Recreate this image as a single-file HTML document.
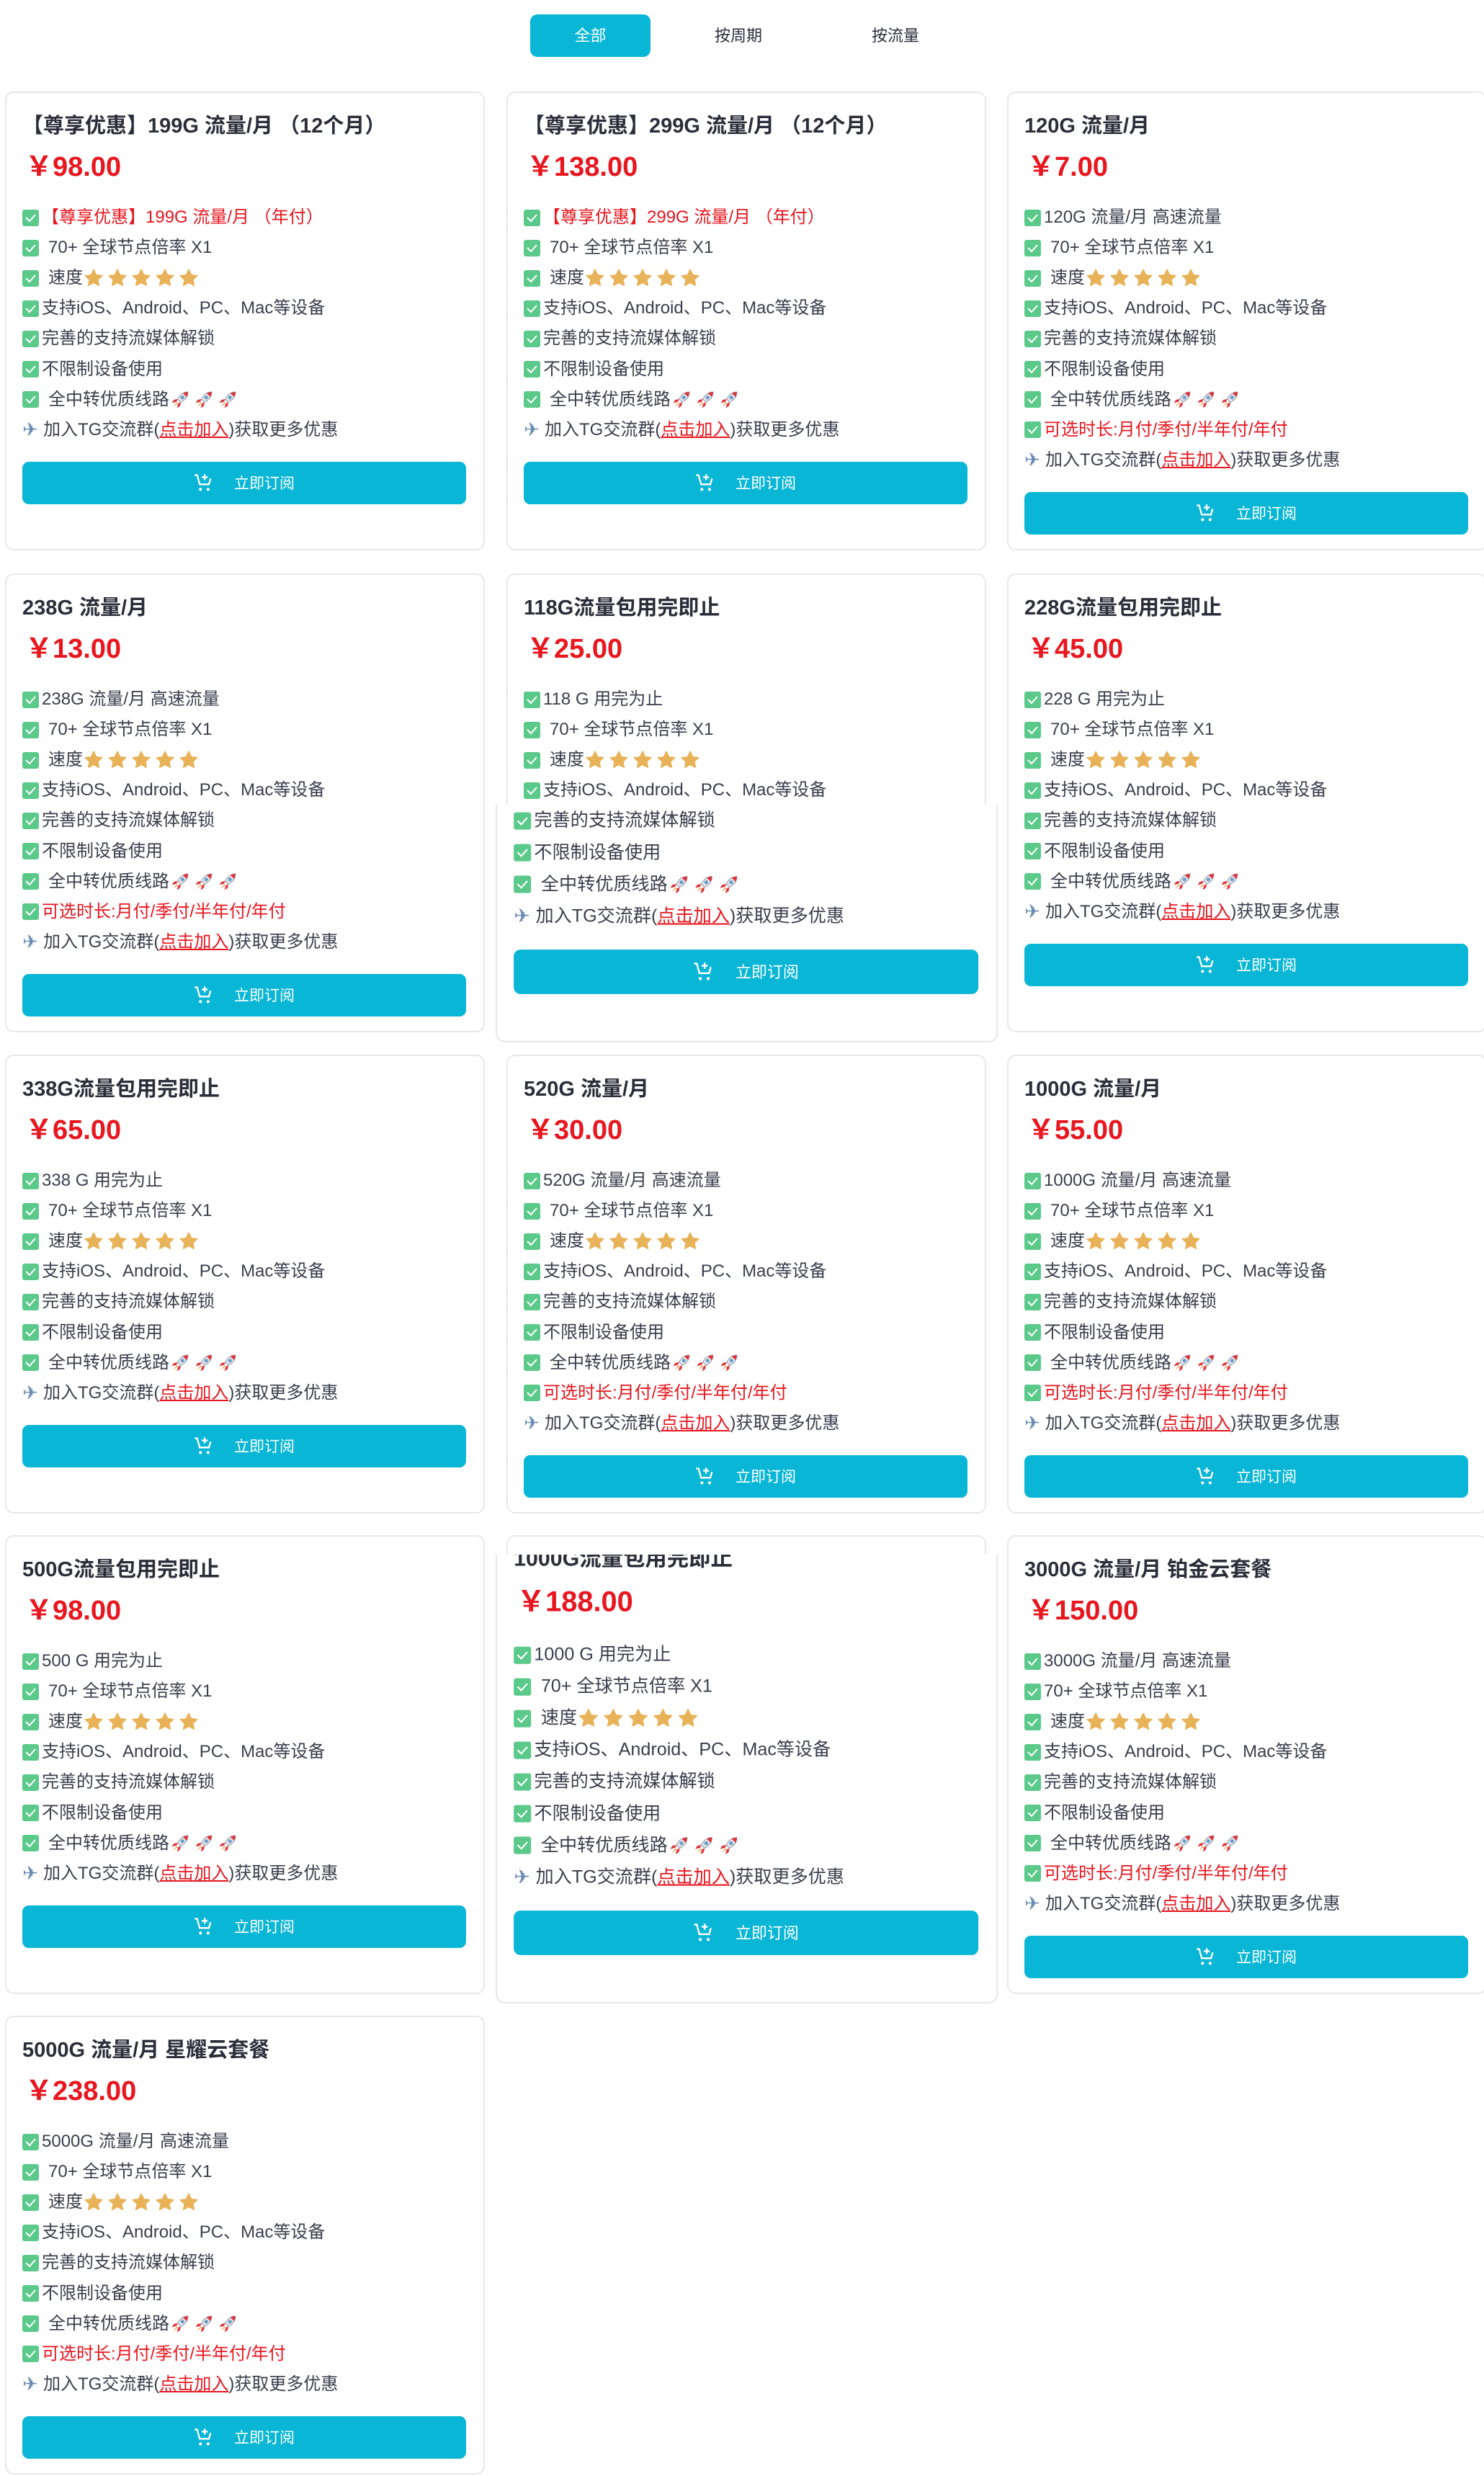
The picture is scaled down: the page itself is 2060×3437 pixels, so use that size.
<!DOCTYPE html>
<html><head><meta charset="utf-8">
<style>
*{margin:0;padding:0;box-sizing:border-box}
body{width:2060px;height:3437px;background:#fff;position:relative;overflow:hidden;font-family:"Liberation Sans","Noto Sans CJK SC",sans-serif;color:#3a3e4c}
.tab{position:absolute;top:20px;height:59px;line-height:59px;font-size:22px;text-align:center}
.tab.on{left:736px;width:167px;background:#0ab6d6;color:#fff;border-radius:10px}
.card{position:absolute;width:666px;height:637px;border:2px solid #e8e8e8;border-radius:12px;background:#fff;padding:28px 22px 0 22px}
.t{font-size:29px;font-weight:bold;line-height:36px;color:#2b2e3a;white-space:nowrap;padding-left:0}
.p{font-size:38px;font-weight:bold;color:#e8161f;line-height:44px;margin-top:17px;padding-left:4px}
.ls{margin-top:27px}
.l{height:42.1px;line-height:42px;font-size:24px;white-space:nowrap;display:flex;align-items:center}
.ck{width:23px;height:23px;background:#5bc98a;border-radius:3px;display:inline-block;flex:none;margin-right:4px;position:relative}
.ck svg{position:absolute;left:3px;top:4px}
.sp{display:inline-block;width:9px}
.r{color:#e8161f}
.a{color:#e8161f;text-decoration:underline}
.pl{color:#6a8bb2;font-size:26px;width:29px;display:inline-block;font-family:"DejaVu Sans",sans-serif}
.btn{margin-top:23px;height:59px;background:#0ab6d6;border-radius:9px;color:#fff;font-size:21px;display:flex;align-items:center;justify-content:center;width:616px}
.btn svg{margin-right:28px}
.st{display:inline-flex;gap:7px;margin-left:2px}
.ro{display:inline-flex;gap:7px;margin-left:2px}
.clip{position:absolute;overflow:hidden;left:0;width:2060px}
.sc{transform:scale(1.047);transform-origin:0 0}
</style></head><body>
<svg width="0" height="0" style="position:absolute">
<defs>
<symbol id="star" viewBox="0 0 24 24"><path d="M12 1l3.4 6.9 7.6 1-5.5 5.2 1.4 7.5L12 18l-6.9 3.6 1.4-7.5L1 9l7.6-1z" fill="#e8b258" stroke="#e8b258" stroke-width="1.2" stroke-linejoin="round"/></symbol>
<symbol id="rk" viewBox="0 0 24 24"><path d="M22 2c-6 0-10 3-13 9l4 4c6-3 9-7 9-13z" fill="#e4e8ee" stroke="#8d97a6" stroke-width=".9"/><path d="M22 2c-2.5 0-4.5.6-6.3 1.7l4.6 4.6C21.4 6.5 22 4.5 22 2z" fill="#e0353d"/><circle cx="15" cy="9" r="2.1" fill="#5aa0d8" stroke="#8d97a6" stroke-width=".6"/><path d="M9 11l-5 1-2.5 4 6-1.5zM13 15l-1 5-4 2.5 1.5-6z" fill="#e0353d"/><path d="M8 15l-5 6 6-4.5z" fill="#f29a3a"/></symbol>
<symbol id="cart" viewBox="0 0 24 24"><path d="M1 3h3l3 11h11l2-7" fill="none" stroke="#fff" stroke-width="2"/><path d="M13 2v7M9.5 5.5h7" stroke="#fff" stroke-width="2"/><circle cx="8" cy="20" r="1.8" fill="#fff"/><circle cx="17" cy="20" r="1.8" fill="#fff"/></symbol>
</defs></svg>

<div class="tab on">全部</div>
<div class="tab" style="left:985px;width:80px;color:#2b2e3a">按周期</div>
<div class="tab" style="left:1203px;width:80px;color:#2b2e3a">按流量</div>

<!-- Row 1 -->
<div class="card" style="left:7px;top:127px">
<div class="t">【尊享优惠】199G 流量/月 （12个月）</div><div class="p">￥98.00</div>
<div class="ls">
<div class="l"><span class="ck"><svg width="17" height="15"><path d="M2 7l5 5 8-9" fill="none" stroke="#fff" stroke-width="2"/></svg></span><span class="r">【尊享优惠】199G 流量/月 （年付）</span></div>
<div class="l"><span class="ck"><svg width="17" height="15"><path d="M2 7l5 5 8-9" fill="none" stroke="#fff" stroke-width="2"/></svg></span><span class="sp"></span>70+ 全球节点倍率 X1</div>
<div class="l"><span class="ck"><svg width="17" height="15"><path d="M2 7l5 5 8-9" fill="none" stroke="#fff" stroke-width="2"/></svg></span><span class="sp"></span>速度<span class="st"><svg width="26" height="26"><use href="#star"/></svg><svg width="26" height="26"><use href="#star"/></svg><svg width="26" height="26"><use href="#star"/></svg><svg width="26" height="26"><use href="#star"/></svg><svg width="26" height="26"><use href="#star"/></svg></span></div>
<div class="l"><span class="ck"><svg width="17" height="15"><path d="M2 7l5 5 8-9" fill="none" stroke="#fff" stroke-width="2"/></svg></span>支持iOS、Android、PC、Mac等设备</div>
<div class="l"><span class="ck"><svg width="17" height="15"><path d="M2 7l5 5 8-9" fill="none" stroke="#fff" stroke-width="2"/></svg></span>完善的支持流媒体解锁</div>
<div class="l"><span class="ck"><svg width="17" height="15"><path d="M2 7l5 5 8-9" fill="none" stroke="#fff" stroke-width="2"/></svg></span>不限制设备使用</div>
<div class="l"><span class="ck"><svg width="17" height="15"><path d="M2 7l5 5 8-9" fill="none" stroke="#fff" stroke-width="2"/></svg></span><span class="sp"></span>全中转优质线路<span class="ro"><svg width="26" height="26"><use href="#rk"/></svg><svg width="26" height="26"><use href="#rk"/></svg><svg width="26" height="26"><use href="#rk"/></svg></span></div>
<div class="l"><span class="pl">✈</span>加入TG交流群(<span class="a">点击加入</span>)获取更多优惠</div>
</div>
<div class="btn"><svg width="28" height="28"><use href="#cart"/></svg>立即订阅</div>
</div>

<div class="card" style="left:703px;top:127px">
<div class="t">【尊享优惠】299G 流量/月 （12个月）</div><div class="p">￥138.00</div>
<div class="ls">
<div class="l"><span class="ck"><svg width="17" height="15"><path d="M2 7l5 5 8-9" fill="none" stroke="#fff" stroke-width="2"/></svg></span><span class="r">【尊享优惠】299G 流量/月 （年付）</span></div>
<div class="l"><span class="ck"><svg width="17" height="15"><path d="M2 7l5 5 8-9" fill="none" stroke="#fff" stroke-width="2"/></svg></span><span class="sp"></span>70+ 全球节点倍率 X1</div>
<div class="l"><span class="ck"><svg width="17" height="15"><path d="M2 7l5 5 8-9" fill="none" stroke="#fff" stroke-width="2"/></svg></span><span class="sp"></span>速度<span class="st"><svg width="26" height="26"><use href="#star"/></svg><svg width="26" height="26"><use href="#star"/></svg><svg width="26" height="26"><use href="#star"/></svg><svg width="26" height="26"><use href="#star"/></svg><svg width="26" height="26"><use href="#star"/></svg></span></div>
<div class="l"><span class="ck"><svg width="17" height="15"><path d="M2 7l5 5 8-9" fill="none" stroke="#fff" stroke-width="2"/></svg></span>支持iOS、Android、PC、Mac等设备</div>
<div class="l"><span class="ck"><svg width="17" height="15"><path d="M2 7l5 5 8-9" fill="none" stroke="#fff" stroke-width="2"/></svg></span>完善的支持流媒体解锁</div>
<div class="l"><span class="ck"><svg width="17" height="15"><path d="M2 7l5 5 8-9" fill="none" stroke="#fff" stroke-width="2"/></svg></span>不限制设备使用</div>
<div class="l"><span class="ck"><svg width="17" height="15"><path d="M2 7l5 5 8-9" fill="none" stroke="#fff" stroke-width="2"/></svg></span><span class="sp"></span>全中转优质线路<span class="ro"><svg width="26" height="26"><use href="#rk"/></svg><svg width="26" height="26"><use href="#rk"/></svg><svg width="26" height="26"><use href="#rk"/></svg></span></div>
<div class="l"><span class="pl">✈</span>加入TG交流群(<span class="a">点击加入</span>)获取更多优惠</div>
</div>
<div class="btn"><svg width="28" height="28"><use href="#cart"/></svg>立即订阅</div>
</div>

<div class="card" style="left:1398px;top:127px">
<div class="t">120G 流量/月</div><div class="p">￥7.00</div>
<div class="ls">
<div class="l"><span class="ck"><svg width="17" height="15"><path d="M2 7l5 5 8-9" fill="none" stroke="#fff" stroke-width="2"/></svg></span>120G 流量/月 高速流量</div>
<div class="l"><span class="ck"><svg width="17" height="15"><path d="M2 7l5 5 8-9" fill="none" stroke="#fff" stroke-width="2"/></svg></span><span class="sp"></span>70+ 全球节点倍率 X1</div>
<div class="l"><span class="ck"><svg width="17" height="15"><path d="M2 7l5 5 8-9" fill="none" stroke="#fff" stroke-width="2"/></svg></span><span class="sp"></span>速度<span class="st"><svg width="26" height="26"><use href="#star"/></svg><svg width="26" height="26"><use href="#star"/></svg><svg width="26" height="26"><use href="#star"/></svg><svg width="26" height="26"><use href="#star"/></svg><svg width="26" height="26"><use href="#star"/></svg></span></div>
<div class="l"><span class="ck"><svg width="17" height="15"><path d="M2 7l5 5 8-9" fill="none" stroke="#fff" stroke-width="2"/></svg></span>支持iOS、Android、PC、Mac等设备</div>
<div class="l"><span class="ck"><svg width="17" height="15"><path d="M2 7l5 5 8-9" fill="none" stroke="#fff" stroke-width="2"/></svg></span>完善的支持流媒体解锁</div>
<div class="l"><span class="ck"><svg width="17" height="15"><path d="M2 7l5 5 8-9" fill="none" stroke="#fff" stroke-width="2"/></svg></span>不限制设备使用</div>
<div class="l"><span class="ck"><svg width="17" height="15"><path d="M2 7l5 5 8-9" fill="none" stroke="#fff" stroke-width="2"/></svg></span><span class="sp"></span>全中转优质线路<span class="ro"><svg width="26" height="26"><use href="#rk"/></svg><svg width="26" height="26"><use href="#rk"/></svg><svg width="26" height="26"><use href="#rk"/></svg></span></div>
<div class="l"><span class="ck"><svg width="17" height="15"><path d="M2 7l5 5 8-9" fill="none" stroke="#fff" stroke-width="2"/></svg></span><span class="r">可选时长:月付/季付/半年付/年付</span></div>
<div class="l"><span class="pl">✈</span>加入TG交流群(<span class="a">点击加入</span>)获取更多优惠</div>
</div>
<div class="btn"><svg width="28" height="28"><use href="#cart"/></svg>立即订阅</div>
</div>

<!-- Row 2 -->
<div class="card" style="left:7px;top:796px">
<div class="t">238G 流量/月</div><div class="p">￥13.00</div>
<div class="ls">
<div class="l"><span class="ck"><svg width="17" height="15"><path d="M2 7l5 5 8-9" fill="none" stroke="#fff" stroke-width="2"/></svg></span>238G 流量/月 高速流量</div>
<div class="l"><span class="ck"><svg width="17" height="15"><path d="M2 7l5 5 8-9" fill="none" stroke="#fff" stroke-width="2"/></svg></span><span class="sp"></span>70+ 全球节点倍率 X1</div>
<div class="l"><span class="ck"><svg width="17" height="15"><path d="M2 7l5 5 8-9" fill="none" stroke="#fff" stroke-width="2"/></svg></span><span class="sp"></span>速度<span class="st"><svg width="26" height="26"><use href="#star"/></svg><svg width="26" height="26"><use href="#star"/></svg><svg width="26" height="26"><use href="#star"/></svg><svg width="26" height="26"><use href="#star"/></svg><svg width="26" height="26"><use href="#star"/></svg></span></div>
<div class="l"><span class="ck"><svg width="17" height="15"><path d="M2 7l5 5 8-9" fill="none" stroke="#fff" stroke-width="2"/></svg></span>支持iOS、Android、PC、Mac等设备</div>
<div class="l"><span class="ck"><svg width="17" height="15"><path d="M2 7l5 5 8-9" fill="none" stroke="#fff" stroke-width="2"/></svg></span>完善的支持流媒体解锁</div>
<div class="l"><span class="ck"><svg width="17" height="15"><path d="M2 7l5 5 8-9" fill="none" stroke="#fff" stroke-width="2"/></svg></span>不限制设备使用</div>
<div class="l"><span class="ck"><svg width="17" height="15"><path d="M2 7l5 5 8-9" fill="none" stroke="#fff" stroke-width="2"/></svg></span><span class="sp"></span>全中转优质线路<span class="ro"><svg width="26" height="26"><use href="#rk"/></svg><svg width="26" height="26"><use href="#rk"/></svg><svg width="26" height="26"><use href="#rk"/></svg></span></div>
<div class="l"><span class="ck"><svg width="17" height="15"><path d="M2 7l5 5 8-9" fill="none" stroke="#fff" stroke-width="2"/></svg></span><span class="r">可选时长:月付/季付/半年付/年付</span></div>
<div class="l"><span class="pl">✈</span>加入TG交流群(<span class="a">点击加入</span>)获取更多优惠</div>
</div>
<div class="btn"><svg width="28" height="28"><use href="#cart"/></svg>立即订阅</div>
</div>

<div class="clip" style="top:796px;height:321px">
<div class="card" style="left:703px;top:0">
<div class="t">118G流量包用完即止</div><div class="p">￥25.00</div>
<div class="ls">
<div class="l"><span class="ck"><svg width="17" height="15"><path d="M2 7l5 5 8-9" fill="none" stroke="#fff" stroke-width="2"/></svg></span>118 G 用完为止</div>
<div class="l"><span class="ck"><svg width="17" height="15"><path d="M2 7l5 5 8-9" fill="none" stroke="#fff" stroke-width="2"/></svg></span><span class="sp"></span>70+ 全球节点倍率 X1</div>
<div class="l"><span class="ck"><svg width="17" height="15"><path d="M2 7l5 5 8-9" fill="none" stroke="#fff" stroke-width="2"/></svg></span><span class="sp"></span>速度<span class="st"><svg width="26" height="26"><use href="#star"/></svg><svg width="26" height="26"><use href="#star"/></svg><svg width="26" height="26"><use href="#star"/></svg><svg width="26" height="26"><use href="#star"/></svg><svg width="26" height="26"><use href="#star"/></svg></span></div>
<div class="l"><span class="ck"><svg width="17" height="15"><path d="M2 7l5 5 8-9" fill="none" stroke="#fff" stroke-width="2"/></svg></span>支持iOS、Android、PC、Mac等设备</div>
</div></div></div>
<div class="clip" style="top:1117px;height:340px">
<div class="card sc" style="left:688px;top:-337px">
<div class="t">118G流量包用完即止</div><div class="p">￥25.00</div>
<div class="ls">
<div class="l"><span class="ck"></span>118 G 用完为止</div>
<div class="l"><span class="ck"></span>70+</div>
<div class="l"><span class="ck"></span>速度</div>
<div class="l"><span class="ck"></span>支持iOS</div>
<div class="l"><span class="ck"><svg width="17" height="15"><path d="M2 7l5 5 8-9" fill="none" stroke="#fff" stroke-width="2"/></svg></span>完善的支持流媒体解锁</div>
<div class="l"><span class="ck"><svg width="17" height="15"><path d="M2 7l5 5 8-9" fill="none" stroke="#fff" stroke-width="2"/></svg></span>不限制设备使用</div>
<div class="l"><span class="ck"><svg width="17" height="15"><path d="M2 7l5 5 8-9" fill="none" stroke="#fff" stroke-width="2"/></svg></span><span class="sp"></span>全中转优质线路<span class="ro"><svg width="26" height="26"><use href="#rk"/></svg><svg width="26" height="26"><use href="#rk"/></svg><svg width="26" height="26"><use href="#rk"/></svg></span></div>
<div class="l"><span class="pl">✈</span>加入TG交流群(<span class="a">点击加入</span>)获取更多优惠</div>
</div>
<div class="btn"><svg width="28" height="28"><use href="#cart"/></svg>立即订阅</div>
</div></div>

<div class="card" style="left:1398px;top:796px">
<div class="t">228G流量包用完即止</div><div class="p">￥45.00</div>
<div class="ls">
<div class="l"><span class="ck"><svg width="17" height="15"><path d="M2 7l5 5 8-9" fill="none" stroke="#fff" stroke-width="2"/></svg></span>228 G 用完为止</div>
<div class="l"><span class="ck"><svg width="17" height="15"><path d="M2 7l5 5 8-9" fill="none" stroke="#fff" stroke-width="2"/></svg></span><span class="sp"></span>70+ 全球节点倍率 X1</div>
<div class="l"><span class="ck"><svg width="17" height="15"><path d="M2 7l5 5 8-9" fill="none" stroke="#fff" stroke-width="2"/></svg></span><span class="sp"></span>速度<span class="st"><svg width="26" height="26"><use href="#star"/></svg><svg width="26" height="26"><use href="#star"/></svg><svg width="26" height="26"><use href="#star"/></svg><svg width="26" height="26"><use href="#star"/></svg><svg width="26" height="26"><use href="#star"/></svg></span></div>
<div class="l"><span class="ck"><svg width="17" height="15"><path d="M2 7l5 5 8-9" fill="none" stroke="#fff" stroke-width="2"/></svg></span>支持iOS、Android、PC、Mac等设备</div>
<div class="l"><span class="ck"><svg width="17" height="15"><path d="M2 7l5 5 8-9" fill="none" stroke="#fff" stroke-width="2"/></svg></span>完善的支持流媒体解锁</div>
<div class="l"><span class="ck"><svg width="17" height="15"><path d="M2 7l5 5 8-9" fill="none" stroke="#fff" stroke-width="2"/></svg></span>不限制设备使用</div>
<div class="l"><span class="ck"><svg width="17" height="15"><path d="M2 7l5 5 8-9" fill="none" stroke="#fff" stroke-width="2"/></svg></span><span class="sp"></span>全中转优质线路<span class="ro"><svg width="26" height="26"><use href="#rk"/></svg><svg width="26" height="26"><use href="#rk"/></svg><svg width="26" height="26"><use href="#rk"/></svg></span></div>
<div class="l"><span class="pl">✈</span>加入TG交流群(<span class="a">点击加入</span>)获取更多优惠</div>
</div>
<div class="btn"><svg width="28" height="28"><use href="#cart"/></svg>立即订阅</div>
</div>

<!-- Row 3 -->
<div class="card" style="left:7px;top:1464px">
<div class="t">338G流量包用完即止</div><div class="p">￥65.00</div>
<div class="ls">
<div class="l"><span class="ck"><svg width="17" height="15"><path d="M2 7l5 5 8-9" fill="none" stroke="#fff" stroke-width="2"/></svg></span>338 G 用完为止</div>
<div class="l"><span class="ck"><svg width="17" height="15"><path d="M2 7l5 5 8-9" fill="none" stroke="#fff" stroke-width="2"/></svg></span><span class="sp"></span>70+ 全球节点倍率 X1</div>
<div class="l"><span class="ck"><svg width="17" height="15"><path d="M2 7l5 5 8-9" fill="none" stroke="#fff" stroke-width="2"/></svg></span><span class="sp"></span>速度<span class="st"><svg width="26" height="26"><use href="#star"/></svg><svg width="26" height="26"><use href="#star"/></svg><svg width="26" height="26"><use href="#star"/></svg><svg width="26" height="26"><use href="#star"/></svg><svg width="26" height="26"><use href="#star"/></svg></span></div>
<div class="l"><span class="ck"><svg width="17" height="15"><path d="M2 7l5 5 8-9" fill="none" stroke="#fff" stroke-width="2"/></svg></span>支持iOS、Android、PC、Mac等设备</div>
<div class="l"><span class="ck"><svg width="17" height="15"><path d="M2 7l5 5 8-9" fill="none" stroke="#fff" stroke-width="2"/></svg></span>完善的支持流媒体解锁</div>
<div class="l"><span class="ck"><svg width="17" height="15"><path d="M2 7l5 5 8-9" fill="none" stroke="#fff" stroke-width="2"/></svg></span>不限制设备使用</div>
<div class="l"><span class="ck"><svg width="17" height="15"><path d="M2 7l5 5 8-9" fill="none" stroke="#fff" stroke-width="2"/></svg></span><span class="sp"></span>全中转优质线路<span class="ro"><svg width="26" height="26"><use href="#rk"/></svg><svg width="26" height="26"><use href="#rk"/></svg><svg width="26" height="26"><use href="#rk"/></svg></span></div>
<div class="l"><span class="pl">✈</span>加入TG交流群(<span class="a">点击加入</span>)获取更多优惠</div>
</div>
<div class="btn"><svg width="28" height="28"><use href="#cart"/></svg>立即订阅</div>
</div>

<div class="card" style="left:703px;top:1464px">
<div class="t">520G 流量/月</div><div class="p">￥30.00</div>
<div class="ls">
<div class="l"><span class="ck"><svg width="17" height="15"><path d="M2 7l5 5 8-9" fill="none" stroke="#fff" stroke-width="2"/></svg></span>520G 流量/月 高速流量</div>
<div class="l"><span class="ck"><svg width="17" height="15"><path d="M2 7l5 5 8-9" fill="none" stroke="#fff" stroke-width="2"/></svg></span><span class="sp"></span>70+ 全球节点倍率 X1</div>
<div class="l"><span class="ck"><svg width="17" height="15"><path d="M2 7l5 5 8-9" fill="none" stroke="#fff" stroke-width="2"/></svg></span><span class="sp"></span>速度<span class="st"><svg width="26" height="26"><use href="#star"/></svg><svg width="26" height="26"><use href="#star"/></svg><svg width="26" height="26"><use href="#star"/></svg><svg width="26" height="26"><use href="#star"/></svg><svg width="26" height="26"><use href="#star"/></svg></span></div>
<div class="l"><span class="ck"><svg width="17" height="15"><path d="M2 7l5 5 8-9" fill="none" stroke="#fff" stroke-width="2"/></svg></span>支持iOS、Android、PC、Mac等设备</div>
<div class="l"><span class="ck"><svg width="17" height="15"><path d="M2 7l5 5 8-9" fill="none" stroke="#fff" stroke-width="2"/></svg></span>完善的支持流媒体解锁</div>
<div class="l"><span class="ck"><svg width="17" height="15"><path d="M2 7l5 5 8-9" fill="none" stroke="#fff" stroke-width="2"/></svg></span>不限制设备使用</div>
<div class="l"><span class="ck"><svg width="17" height="15"><path d="M2 7l5 5 8-9" fill="none" stroke="#fff" stroke-width="2"/></svg></span><span class="sp"></span>全中转优质线路<span class="ro"><svg width="26" height="26"><use href="#rk"/></svg><svg width="26" height="26"><use href="#rk"/></svg><svg width="26" height="26"><use href="#rk"/></svg></span></div>
<div class="l"><span class="ck"><svg width="17" height="15"><path d="M2 7l5 5 8-9" fill="none" stroke="#fff" stroke-width="2"/></svg></span><span class="r">可选时长:月付/季付/半年付/年付</span></div>
<div class="l"><span class="pl">✈</span>加入TG交流群(<span class="a">点击加入</span>)获取更多优惠</div>
</div>
<div class="btn"><svg width="28" height="28"><use href="#cart"/></svg>立即订阅</div>
</div>

<div class="card" style="left:1398px;top:1464px">
<div class="t">1000G 流量/月</div><div class="p">￥55.00</div>
<div class="ls">
<div class="l"><span class="ck"><svg width="17" height="15"><path d="M2 7l5 5 8-9" fill="none" stroke="#fff" stroke-width="2"/></svg></span>1000G 流量/月 高速流量</div>
<div class="l"><span class="ck"><svg width="17" height="15"><path d="M2 7l5 5 8-9" fill="none" stroke="#fff" stroke-width="2"/></svg></span><span class="sp"></span>70+ 全球节点倍率 X1</div>
<div class="l"><span class="ck"><svg width="17" height="15"><path d="M2 7l5 5 8-9" fill="none" stroke="#fff" stroke-width="2"/></svg></span><span class="sp"></span>速度<span class="st"><svg width="26" height="26"><use href="#star"/></svg><svg width="26" height="26"><use href="#star"/></svg><svg width="26" height="26"><use href="#star"/></svg><svg width="26" height="26"><use href="#star"/></svg><svg width="26" height="26"><use href="#star"/></svg></span></div>
<div class="l"><span class="ck"><svg width="17" height="15"><path d="M2 7l5 5 8-9" fill="none" stroke="#fff" stroke-width="2"/></svg></span>支持iOS、Android、PC、Mac等设备</div>
<div class="l"><span class="ck"><svg width="17" height="15"><path d="M2 7l5 5 8-9" fill="none" stroke="#fff" stroke-width="2"/></svg></span>完善的支持流媒体解锁</div>
<div class="l"><span class="ck"><svg width="17" height="15"><path d="M2 7l5 5 8-9" fill="none" stroke="#fff" stroke-width="2"/></svg></span>不限制设备使用</div>
<div class="l"><span class="ck"><svg width="17" height="15"><path d="M2 7l5 5 8-9" fill="none" stroke="#fff" stroke-width="2"/></svg></span><span class="sp"></span>全中转优质线路<span class="ro"><svg width="26" height="26"><use href="#rk"/></svg><svg width="26" height="26"><use href="#rk"/></svg><svg width="26" height="26"><use href="#rk"/></svg></span></div>
<div class="l"><span class="ck"><svg width="17" height="15"><path d="M2 7l5 5 8-9" fill="none" stroke="#fff" stroke-width="2"/></svg></span><span class="r">可选时长:月付/季付/半年付/年付</span></div>
<div class="l"><span class="pl">✈</span>加入TG交流群(<span class="a">点击加入</span>)获取更多优惠</div>
</div>
<div class="btn"><svg width="28" height="28"><use href="#cart"/></svg>立即订阅</div>
</div>

<!-- Row 4 -->
<div class="card" style="left:7px;top:2131px">
<div class="t">500G流量包用完即止</div><div class="p">￥98.00</div>
<div class="ls">
<div class="l"><span class="ck"><svg width="17" height="15"><path d="M2 7l5 5 8-9" fill="none" stroke="#fff" stroke-width="2"/></svg></span>500 G 用完为止</div>
<div class="l"><span class="ck"><svg width="17" height="15"><path d="M2 7l5 5 8-9" fill="none" stroke="#fff" stroke-width="2"/></svg></span><span class="sp"></span>70+ 全球节点倍率 X1</div>
<div class="l"><span class="ck"><svg width="17" height="15"><path d="M2 7l5 5 8-9" fill="none" stroke="#fff" stroke-width="2"/></svg></span><span class="sp"></span>速度<span class="st"><svg width="26" height="26"><use href="#star"/></svg><svg width="26" height="26"><use href="#star"/></svg><svg width="26" height="26"><use href="#star"/></svg><svg width="26" height="26"><use href="#star"/></svg><svg width="26" height="26"><use href="#star"/></svg></span></div>
<div class="l"><span class="ck"><svg width="17" height="15"><path d="M2 7l5 5 8-9" fill="none" stroke="#fff" stroke-width="2"/></svg></span>支持iOS、Android、PC、Mac等设备</div>
<div class="l"><span class="ck"><svg width="17" height="15"><path d="M2 7l5 5 8-9" fill="none" stroke="#fff" stroke-width="2"/></svg></span>完善的支持流媒体解锁</div>
<div class="l"><span class="ck"><svg width="17" height="15"><path d="M2 7l5 5 8-9" fill="none" stroke="#fff" stroke-width="2"/></svg></span>不限制设备使用</div>
<div class="l"><span class="ck"><svg width="17" height="15"><path d="M2 7l5 5 8-9" fill="none" stroke="#fff" stroke-width="2"/></svg></span><span class="sp"></span>全中转优质线路<span class="ro"><svg width="26" height="26"><use href="#rk"/></svg><svg width="26" height="26"><use href="#rk"/></svg><svg width="26" height="26"><use href="#rk"/></svg></span></div>
<div class="l"><span class="pl">✈</span>加入TG交流群(<span class="a">点击加入</span>)获取更多优惠</div>
</div>
<div class="btn"><svg width="28" height="28"><use href="#cart"/></svg>立即订阅</div>
</div>

<div class="clip" style="top:2131px;height:27px">
<div class="card" style="left:703px;top:0"></div></div>
<div class="clip" style="top:2158px;height:640px">
<div class="card sc" style="left:688px;top:-44px">
<div class="t">1000G流量包用完即止</div><div class="p">￥188.00</div>
<div class="ls">
<div class="l"><span class="ck"><svg width="17" height="15"><path d="M2 7l5 5 8-9" fill="none" stroke="#fff" stroke-width="2"/></svg></span>1000 G 用完为止</div>
<div class="l"><span class="ck"><svg width="17" height="15"><path d="M2 7l5 5 8-9" fill="none" stroke="#fff" stroke-width="2"/></svg></span><span class="sp"></span>70+ 全球节点倍率 X1</div>
<div class="l"><span class="ck"><svg width="17" height="15"><path d="M2 7l5 5 8-9" fill="none" stroke="#fff" stroke-width="2"/></svg></span><span class="sp"></span>速度<span class="st"><svg width="26" height="26"><use href="#star"/></svg><svg width="26" height="26"><use href="#star"/></svg><svg width="26" height="26"><use href="#star"/></svg><svg width="26" height="26"><use href="#star"/></svg><svg width="26" height="26"><use href="#star"/></svg></span></div>
<div class="l"><span class="ck"><svg width="17" height="15"><path d="M2 7l5 5 8-9" fill="none" stroke="#fff" stroke-width="2"/></svg></span>支持iOS、Android、PC、Mac等设备</div>
<div class="l"><span class="ck"><svg width="17" height="15"><path d="M2 7l5 5 8-9" fill="none" stroke="#fff" stroke-width="2"/></svg></span>完善的支持流媒体解锁</div>
<div class="l"><span class="ck"><svg width="17" height="15"><path d="M2 7l5 5 8-9" fill="none" stroke="#fff" stroke-width="2"/></svg></span>不限制设备使用</div>
<div class="l"><span class="ck"><svg width="17" height="15"><path d="M2 7l5 5 8-9" fill="none" stroke="#fff" stroke-width="2"/></svg></span><span class="sp"></span>全中转优质线路<span class="ro"><svg width="26" height="26"><use href="#rk"/></svg><svg width="26" height="26"><use href="#rk"/></svg><svg width="26" height="26"><use href="#rk"/></svg></span></div>
<div class="l"><span class="pl">✈</span>加入TG交流群(<span class="a">点击加入</span>)获取更多优惠</div>
</div>
<div class="btn"><svg width="28" height="28"><use href="#cart"/></svg>立即订阅</div>
</div></div>

<div class="card" style="left:1398px;top:2131px">
<div class="t">3000G 流量/月 铂金云套餐</div><div class="p">￥150.00</div>
<div class="ls">
<div class="l"><span class="ck"><svg width="17" height="15"><path d="M2 7l5 5 8-9" fill="none" stroke="#fff" stroke-width="2"/></svg></span>3000G 流量/月 高速流量</div>
<div class="l"><span class="ck"><svg width="17" height="15"><path d="M2 7l5 5 8-9" fill="none" stroke="#fff" stroke-width="2"/></svg></span>70+ 全球节点倍率 X1</div>
<div class="l"><span class="ck"><svg width="17" height="15"><path d="M2 7l5 5 8-9" fill="none" stroke="#fff" stroke-width="2"/></svg></span><span class="sp"></span>速度<span class="st"><svg width="26" height="26"><use href="#star"/></svg><svg width="26" height="26"><use href="#star"/></svg><svg width="26" height="26"><use href="#star"/></svg><svg width="26" height="26"><use href="#star"/></svg><svg width="26" height="26"><use href="#star"/></svg></span></div>
<div class="l"><span class="ck"><svg width="17" height="15"><path d="M2 7l5 5 8-9" fill="none" stroke="#fff" stroke-width="2"/></svg></span>支持iOS、Android、PC、Mac等设备</div>
<div class="l"><span class="ck"><svg width="17" height="15"><path d="M2 7l5 5 8-9" fill="none" stroke="#fff" stroke-width="2"/></svg></span>完善的支持流媒体解锁</div>
<div class="l"><span class="ck"><svg width="17" height="15"><path d="M2 7l5 5 8-9" fill="none" stroke="#fff" stroke-width="2"/></svg></span>不限制设备使用</div>
<div class="l"><span class="ck"><svg width="17" height="15"><path d="M2 7l5 5 8-9" fill="none" stroke="#fff" stroke-width="2"/></svg></span><span class="sp"></span>全中转优质线路<span class="ro"><svg width="26" height="26"><use href="#rk"/></svg><svg width="26" height="26"><use href="#rk"/></svg><svg width="26" height="26"><use href="#rk"/></svg></span></div>
<div class="l"><span class="ck"><svg width="17" height="15"><path d="M2 7l5 5 8-9" fill="none" stroke="#fff" stroke-width="2"/></svg></span><span class="r">可选时长:月付/季付/半年付/年付</span></div>
<div class="l"><span class="pl">✈</span>加入TG交流群(<span class="a">点击加入</span>)获取更多优惠</div>
</div>
<div class="btn"><svg width="28" height="28"><use href="#cart"/></svg>立即订阅</div>
</div>

<!-- Row 5 -->
<div class="card" style="left:7px;top:2798px">
<div class="t">5000G 流量/月 星耀云套餐</div><div class="p">￥238.00</div>
<div class="ls">
<div class="l"><span class="ck"><svg width="17" height="15"><path d="M2 7l5 5 8-9" fill="none" stroke="#fff" stroke-width="2"/></svg></span>5000G 流量/月 高速流量</div>
<div class="l"><span class="ck"><svg width="17" height="15"><path d="M2 7l5 5 8-9" fill="none" stroke="#fff" stroke-width="2"/></svg></span><span class="sp"></span>70+ 全球节点倍率 X1</div>
<div class="l"><span class="ck"><svg width="17" height="15"><path d="M2 7l5 5 8-9" fill="none" stroke="#fff" stroke-width="2"/></svg></span><span class="sp"></span>速度<span class="st"><svg width="26" height="26"><use href="#star"/></svg><svg width="26" height="26"><use href="#star"/></svg><svg width="26" height="26"><use href="#star"/></svg><svg width="26" height="26"><use href="#star"/></svg><svg width="26" height="26"><use href="#star"/></svg></span></div>
<div class="l"><span class="ck"><svg width="17" height="15"><path d="M2 7l5 5 8-9" fill="none" stroke="#fff" stroke-width="2"/></svg></span>支持iOS、Android、PC、Mac等设备</div>
<div class="l"><span class="ck"><svg width="17" height="15"><path d="M2 7l5 5 8-9" fill="none" stroke="#fff" stroke-width="2"/></svg></span>完善的支持流媒体解锁</div>
<div class="l"><span class="ck"><svg width="17" height="15"><path d="M2 7l5 5 8-9" fill="none" stroke="#fff" stroke-width="2"/></svg></span>不限制设备使用</div>
<div class="l"><span class="ck"><svg width="17" height="15"><path d="M2 7l5 5 8-9" fill="none" stroke="#fff" stroke-width="2"/></svg></span><span class="sp"></span>全中转优质线路<span class="ro"><svg width="26" height="26"><use href="#rk"/></svg><svg width="26" height="26"><use href="#rk"/></svg><svg width="26" height="26"><use href="#rk"/></svg></span></div>
<div class="l"><span class="ck"><svg width="17" height="15"><path d="M2 7l5 5 8-9" fill="none" stroke="#fff" stroke-width="2"/></svg></span><span class="r">可选时长:月付/季付/半年付/年付</span></div>
<div class="l"><span class="pl">✈</span>加入TG交流群(<span class="a">点击加入</span>)获取更多优惠</div>
</div>
<div class="btn"><svg width="28" height="28"><use href="#cart"/></svg>立即订阅</div>
</div>
</body></html>
